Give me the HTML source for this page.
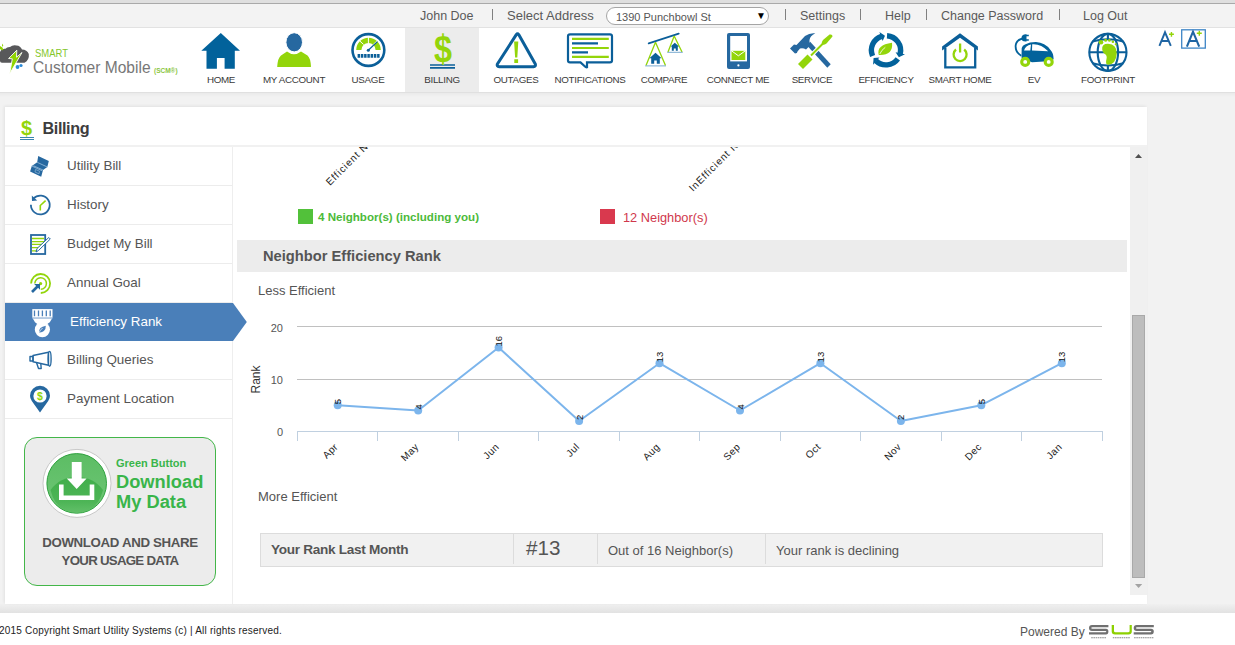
<!DOCTYPE html>
<html><head><meta charset="utf-8">
<style>
*{margin:0;padding:0;box-sizing:border-box}
html,body{width:1235px;height:645px;overflow:hidden;background:#f2f2f2;font-family:"Liberation Sans",sans-serif;color:#333}
.a{position:absolute}
.t{position:absolute;white-space:nowrap;line-height:1}
#topstrip{left:0;top:0;width:1235px;height:3px;background:#dfdfdf}
#topline{left:0;top:3px;width:1235px;height:1px;background:#a9a9a9}
#linkbar{left:0;top:4px;width:1235px;height:24px;background:#f3f3f3;border-bottom:1px solid #e2e2e2}
.lk{font-size:12.5px;color:#5a5a5a;top:5.5px}
.sep{position:absolute;top:5px;width:1.3px;height:10.5px;background:#808080}
#sel{left:606px;top:3px;width:163px;height:18px;border:1px solid #a5a5a5;border-radius:9px;background:#fff}
#nav{left:0;top:28px;width:1235px;height:65px;background:#fff;border-bottom:1px solid #e0e0e0}
.nl{font-size:9.8px;letter-spacing:-0.3px;color:#3a3a3a;top:46.5px;text-align:center;width:74px;margin-left:-37px}
#act{left:405px;top:0;width:74px;height:64px;background:#ececec}
#navsh{left:0;top:93px;width:1235px;height:4px;background:linear-gradient(rgba(0,0,0,0.035),rgba(0,0,0,0))}
#panel{left:5px;top:107px;width:1142px;height:497px;background:#fff;box-shadow:-1px -1px 3px rgba(0,0,0,0.07)}
#footer{left:0;top:613px;width:1235px;height:32px;background:#fff}
#gstrip{left:0;top:604px;width:1235px;height:9px;background:linear-gradient(#f0f0f0,#e2e2e2)}
.si{position:absolute;left:0;width:227px;height:39px;border-bottom:1px solid #ececec}
.si .t{font-size:13.4px;color:#555;left:62px;top:11.9px}
</style></head><body>
<div class="a" id="topstrip"></div>
<div class="a" id="topline"></div>
<div class="a" id="linkbar">
  <div class="t lk" style="left:420px">John Doe</div>
  <div class="sep" style="left:492px"></div>
  <div class="t lk" style="left:507px;font-size:13px;top:5px">Select Address</div>
  <div class="a" id="sel"><div class="t" style="left:9px;top:3.5px;font-size:11px;color:#555">1390 Punchbowl St</div>
    <div class="t" style="left:149px;top:3px;font-size:10px;color:#000">&#9660;</div></div>
  <div class="sep" style="left:785px"></div>
  <div class="t lk" style="left:800px">Settings</div>
  <div class="sep" style="left:860px"></div>
  <div class="t lk" style="left:885px">Help</div>
  <div class="sep" style="left:926px"></div>
  <div class="t lk" style="left:941px">Change Password</div>
  <div class="sep" style="left:1059px"></div>
  <div class="t lk" style="left:1083px">Log Out</div>
</div>

<div class="a" id="nav">
  <div class="a" id="act"></div>
  <!-- logo -->
  <svg class="a" style="left:0;top:0" width="32" height="50" viewBox="0 28 32 50">
    <path d="M0 52 Q2 48.2 5.5 48.8 Q7 46.8 10 47 Q12.5 44.6 16.5 45.4 Q20.5 45.6 22 49.5 Q27 49.5 28.8 54 Q29.5 60 24.5 62.8 L2 62.8 Q0 62.8 0 61 Z" fill="#58585a"/>
    <path d="M16.8 50.2 L8.6 58.5 L12.3 58.8 L9.7 73.7 L22 52.5 L16.5 57.2 Z" fill="#8fd400" stroke="#fff" stroke-width="0.9" stroke-linejoin="miter"/>
    <circle cx="17.5" cy="67" r="1.9" fill="#2a8ad8"/><circle cx="21" cy="65.5" r="1.6" fill="#2a8ad8"/>
    <path d="M0 46 Q3 47 3.5 50 Q1 50.5 0 49 Z M2.5 43.5 Q4 45.5 2.5 47 Q1.5 45 2.5 43.5 Z" fill="#8fd400"/>
  </svg>
  <div class="t" style="left:34.5px;top:20px;font-size:11px;color:#84c62a;transform:scaleX(0.86);transform-origin:0 0">SMART</div>
  <div class="t" style="left:33px;top:31px;font-size:17px;color:#777;transform:scaleX(0.915);transform-origin:0 0">Customer Mobile</div>
  <div class="t" style="left:154px;top:40px;font-size:6.5px;color:#8cc63f;font-weight:bold">(SCM&reg;)</div>

  <!-- icons -->
  <svg class="a" style="left:0;top:0" width="1235" height="64">
    <!-- home -->
    <path d="M220.8 4.9 L240 22.8 L234.8 22.8 L234.8 40.8 L224.6 40.8 L224.6 30.1 L216.9 30.1 L216.9 40.8 L206.5 40.8 L206.5 22.8 L201.3 22.8 Z" fill="#02629b"/>
    <!-- account -->
    <path d="M277.2 38.5 Q277.8 30 281 27.5 L287 23.5 Q294 29 301 23.5 L307.5 27.5 Q310.5 30 311 38.5 Q311 39 310 39 L278 39 Q277 39 277.2 38.5 Z" fill="#93d50a"/>
    <ellipse cx="294.2" cy="14.3" rx="8.3" ry="9.6" fill="#2668a0" stroke="#fff" stroke-width="1"/>
    <!-- usage -->
    <circle cx="368.4" cy="22" r="15.9" fill="none" stroke="#0b5f99" stroke-width="2.6"/>
    <path d="M356.2 22 A12.3 12.3 0 0 1 380.8 22 L375.6 22 A7.1 7.1 0 0 0 361.4 22 Z" fill="#93d50a"/>
    <path d="M368.4 9 L368.4 15.5 M359.6 12.8 L363.6 16.5 M377.2 12.8 L373.2 16.5" stroke="#fff" stroke-width="1"/>
    <path d="M368.3 22.3 L377.4 13.6" stroke="#0b5f99" stroke-width="1.2"/>
    <circle cx="368.3" cy="22.3" r="1.5" fill="#0b5f99"/>
    <path d="M357.6 27.8 H380" stroke="#0b5f99" stroke-width="3.8" stroke-dasharray="2.5 0.75"/>
    <!-- billing -->
    <path d="M430 37 H455 M430 39.9 H455" stroke="#0b5f99" stroke-width="1.7"/>
    <!-- outages -->
    <path d="M516.3 6.6 Q517.5 5 518.7 6.6 L535.3 36 Q536 38.5 533.5 38.7 L499.2 38.7 Q496.6 38.5 497.4 36 Z" fill="none" stroke="#0b5f99" stroke-width="3" stroke-linejoin="round"/>
    <path d="M514.1 13.5 L518.3 13.5 L517.3 29.5 L515.1 29.5 Z M514.3 31.3 H518.1 V35 H514.3 Z" fill="#93d50a"/>
    <!-- notifications -->
    <path d="M570 6.3 H610 Q612 6.3 612 8.3 V32.6 Q612 34.4 610 34.4 L587 34.4 L587 39.2 Q586 39.5 585 38.5 L580.5 34.4 L570 34.4 Q568 34.4 568 32.6 V8.3 Q568 6.3 570 6.3 Z" fill="none" stroke="#0b5f99" stroke-width="2.2"/>
    <path d="M572 10.8 H608.8 M572 20 H608.8 M572 28.9 H608.8" stroke="#93d50a" stroke-width="2.2"/>
    <path d="M572 15.4 H598 M572 24.3 H588" stroke="#0b5f99" stroke-width="2.2"/>
    <!-- compare -->
    <path d="M648.7 15.4 L678.7 5.6" stroke="#0b5f99" stroke-width="1.8" stroke-linecap="round"/>
    <path d="M655.5 14.2 L646 37.6 M655.5 14.2 L665.5 37.6 M674.2 8 L668 24 M674.2 8 L682 24" stroke="#93d50a" stroke-width="1.3"/>
    <path d="M645.2 37.9 H666 M667.2 24.3 H682.8" stroke="#7aaad0" stroke-width="1"/>
    <path d="M655.5 24.8 L661.6 30.2 L659.8 30.2 L659.8 35.8 L656.8 35.8 L656.8 32.5 L654.2 32.5 L654.2 35.8 L651.2 35.8 L651.2 30.2 L649.4 30.2 Z" fill="#0b5f99"/>
    <path d="M674.8 14.8 L679 18.5 L677.8 18.5 L677.8 22.8 L675.8 22.8 L675.8 20.5 L673.8 20.5 L673.8 22.8 L671.8 22.8 L671.8 18.5 L670.6 18.5 Z" fill="#0b5f99"/>
    <!-- connect me -->
    <rect x="727" y="4.9" width="23" height="36" rx="2" fill="#2668a0"/>
    <rect x="730.2" y="8" width="16.8" height="25.4" fill="#fff"/>
    <path d="M731.5 22.8 H745.3 V32 H731.5 Z" fill="#93d50a"/>
    <path d="M731.5 22.8 L738.4 27.8 L745.3 22.8" fill="none" stroke="#fff" stroke-width="1"/>
    <circle cx="738.4" cy="37.4" r="1.1" fill="#fff"/>
    <!-- service -->
    <g transform="translate(0 -28)">
    <path d="M810.2 41.7 L806.8 45.3 L827.3 67.8 L830.7 64.2 Z" fill="#2668a0"/>
    <path d="M790 48.5 L794 44.5 L796.5 45 L805 36 Q810 32.5 815.3 33.3 Q810 36 809.5 40 Q809 43 810.5 45 L806 49.5 Q803 47.5 800 48.5 L797.5 51.5 Q797.5 53.5 795 53.5 Z" fill="#2668a0"/>
    <path d="M823 43.5 L811 55.5" stroke="#fff" stroke-width="4"/>
    <path d="M823 43.5 L811 55.5" stroke="#93d50a" stroke-width="2"/>
    <path d="M829.5 34.6 Q832.5 33.8 832.5 36.5 L826.5 43.5 Q823.5 45.8 821.8 44.2 Q821.2 42.2 823 40 Z" fill="#93d50a"/>
    <path d="M807.5 54.5 L812.5 59.5 L803 69 L798 64 Z" fill="#93d50a"/>
    </g>
    <!-- efficiency -->
    <g transform="translate(0 -28)">
    <path d="M887.02 35.74 A14.6 14.6 0 0 1 900.17 53.83" fill="none" stroke="#02629b" stroke-width="5.4"/>
    <path d="M895.59 52.34 L904.98 54.33 L898.89 57.15 Z" fill="#02629b"/>
    <path d="M897.81 58.88 A14.6 14.6 0 0 1 875.86 60.80" fill="none" stroke="#02629b" stroke-width="5.4"/>
    <path d="M879.44 57.58 L873.02 64.72 L873.62 58.04 Z" fill="#02629b"/>
    <path d="M872.56 56.00 A14.6 14.6 0 0 1 881.49 36.41" fill="none" stroke="#02629b" stroke-width="5.4"/>
    <path d="M882.65 41.09 L879.36 32.07 L884.98 35.74 Z" fill="#02629b"/>
    <path d="M878.8 55 Q876 45 892 42.8 Q893.5 55.5 878.8 55 Z" fill="#93d50a"/>
    <path d="M879.8 54 Q881.5 50 885.3 47.3" stroke="#fff" stroke-width="0.8" fill="none"/>
    </g>
    <!-- smart home -->
    <path d="M942.1 18.5 L960 5.3 L977.9 18.5 L977.9 22.6 L960 9.8 L942.1 22.6 Z" fill="#0b5f99"/>
    <path d="M945.3 20 V39.4 H975.2 V20" fill="none" stroke="#0b5f99" stroke-width="2.3"/>
    <path d="M956 21.5 A6.5 6.5 0 1 0 964.2 21.5" fill="none" stroke="#93d50a" stroke-width="2.3"/>
    <path d="M960.1 15.5 V24.5" stroke="#93d50a" stroke-width="2.3"/>
    <!-- ev -->
    <g transform="translate(0 -28)">
    <path d="M1021.5 57 L1021.7 48 Q1022.5 45 1025 44.5 Q1030 42 1036 42.1 Q1045 42.5 1050.5 50 Q1053.5 53 1053.6 59 L1052 61 L1032 62.3 L1021.8 58.5 Z" fill="#02629b"/>
    <path d="M1024 50.5 Q1025.5 45.5 1031 44.5 L1030.3 50.5 Z M1032.2 44.2 Q1041 43.5 1048.2 51.3 L1032 50.6 Z" fill="#fff"/>
    <path d="M1021.2 55.8 Q1015.5 52.5 1015.6 46 Q1016 40 1022.5 38.5" fill="none" stroke="#02629b" stroke-width="1.8"/>
    <path d="M1021.6 37 Q1022.5 34.3 1025.5 34.3 L1026.5 34.3 V41.5 L1025.5 41.5 Q1022 41.5 1021.6 39 Z" fill="#02629b"/>
    <path d="M1026 35.6 H1028.8 M1026 39.9 H1028.8" stroke="#02629b" stroke-width="1.5"/>
    <circle cx="1025.2" cy="61.9" r="3.5" fill="#fff" stroke="#93d50a" stroke-width="3.1"/>
    <circle cx="1048.7" cy="61.9" r="3.5" fill="#fff" stroke="#93d50a" stroke-width="3.1"/>
    </g>
    <!-- footprint -->
    <g transform="translate(0 -28)">
    <g fill="none" stroke="#0b5f99" stroke-width="2.1">
      <ellipse cx="1107.9" cy="52.35" rx="18.6" ry="18.5"/>
      <ellipse cx="1107.9" cy="52.35" rx="10.2" ry="18.5"/>
      <path d="M1089.3 52.3 H1126.5 M1107.9 33.8 V38.2 M1107.9 66.5 V71 M1092.5 41.5 Q1107.9 37 1123.3 41.5 M1092.5 63.2 Q1107.9 67.7 1123.3 63.2"/>
    </g>
    <path d="M1102.2 49.5 Q1101.5 43.8 1108 43.8 Q1117 44.5 1116.8 53.5 Q1116 64.5 1108 64.8 Q1105 64.5 1106.5 59 Q1107.5 55 1104.2 53.5 Q1102.5 52 1102.2 49.5 Z" fill="#93d50a"/>
    <circle cx="1101" cy="42.3" r="2.3" fill="#93d50a"/><circle cx="1105.6" cy="40.2" r="1.5" fill="#93d50a"/>
    <circle cx="1109.4" cy="40.4" r="1.4" fill="#93d50a"/><circle cx="1112.9" cy="41.8" r="1.3" fill="#93d50a"/>
    <circle cx="1115.8" cy="44.3" r="1.1" fill="#93d50a"/>
    </g>
  </svg>
  <div class="t nl" style="left:221px">HOME</div>
  <div class="t nl" style="left:294px">MY ACCOUNT</div>
  <div class="t nl" style="left:368px">USAGE</div>
  <div class="t nl" style="left:442px">BILLING</div>
  <div class="t nl" style="left:516px">OUTAGES</div>
  <div class="t nl" style="left:590px">NOTIFICATIONS</div>
  <div class="t nl" style="left:664px">COMPARE</div>
  <div class="t nl" style="left:738px">CONNECT ME</div>
  <div class="t nl" style="left:812px">SERVICE</div>
  <div class="t nl" style="left:886px">EFFICIENCY</div>
  <div class="t nl" style="left:960px">SMART HOME</div>
  <div class="t nl" style="left:1034px">EV</div>
  <div class="t nl" style="left:1108px">FOOTPRINT</div>
  <div class="t" style="left:433.5px;top:1.6px;font-size:38.5px;font-weight:bold;color:#93d50a;transform:scaleX(0.84);transform-origin:0 0">$</div>
  <!-- A+ -->
  <svg class="a" style="left:1150px;top:0" width="60" height="24" viewBox="1150 28 60 24">
    <g fill="none" stroke="#1f65a3" stroke-linecap="butt">
      <path d="M1159.4 45.8 L1165 32.3 L1170.8 45.8 M1161.4 41 H1168.7" stroke-width="1.9"/>
      <path d="M1186.9 46.7 L1193 31.7 L1199.2 46.7 M1189.3 41 H1196.8" stroke-width="2.1"/>
    </g>
    <path d="M1169 34.3 H1173.9 M1171.45 31.9 V36.7 M1196.8 33.3 H1201.8 M1199.3 30.8 V35.8" stroke="#93d50a" stroke-width="1.4"/>
    <rect x="1181.7" y="29.8" width="23.6" height="18.3" fill="none" stroke="#3d85c6" stroke-width="1.3"/>
  </svg>
</div>

<div class="a" id="navsh"></div>
<div class="a" id="gstrip"></div>
<div class="a" id="panel">
  <div class="t" style="left:37.5px;top:12.8px;font-size:16.2px;letter-spacing:-0.4px;font-weight:bold;color:#3d3d3d">Billing</div>
  <div class="t" style="left:16px;top:11px;font-size:20px;font-weight:bold;color:#93d50a">$</div>
  <div class="a" style="left:15px;top:29.5px;width:14px;height:1.3px;background:#3a84b0"></div>
  <div class="a" style="left:15px;top:31.5px;width:14px;height:1.3px;background:#3a84b0"></div>
  <div class="a" style="left:0;top:38px;width:1142px;height:2px;background:#f1f1f1"></div>
  <div class="a" style="left:227px;top:40px;width:1px;height:457px;background:#eeeeee"></div>
  <!-- sidebar -->
  <div class="si" style="top:40px"><div class="t">Utility Bill</div></div>
  <div class="si" style="top:79px"><div class="t">History</div></div>
  <div class="si" style="top:118px"><div class="t">Budget My Bill</div></div>
  <div class="si" style="top:157px"><div class="t">Annual Goal</div></div>
  <div class="a" style="left:0;top:196px;width:228px;height:38px;background:#4a7fb9"></div>
  <svg class="a" style="left:228px;top:196px" width="15" height="38"><path d="M0 0 L13.8 19 L0 38 Z" fill="#4a7fb9"/></svg>
  <div class="t" style="left:65px;top:208.3px;font-size:13.4px;color:#fff">Efficiency Rank</div>
  <div class="si" style="top:234px;border-top:0"><div class="t">Billing Queries</div></div>
  <div class="si" style="top:273px"><div class="t">Payment Location</div></div>
<svg class="a" style="left:0;top:0" width="240" height="320" viewBox="5 107 240 320">
    <!-- utility bill -->
    <path d="M38.2 156.1 L48.8 160.9 L47.3 167 L43 170 L41.2 176.8 L30.1 171.6 L31.8 166 L37.2 162.3 Z" fill="#2668a0"/>
    <path d="M37.2 162.3 L47.3 167 M33.5 165.8 L43 170 M31.8 166 L42.2 170.8" stroke="#8fb6d6" stroke-width="0.9" fill="none"/>
    <path d="M35.5 169.5 L39.5 171.2 L39 173.8 L35 172 Z" fill="none" stroke="#8fb6d6" stroke-width="0.7"/>
    <!-- history -->
    <path d="M33.5 198.5 A9.4 9.4 0 1 1 30.9 204.8" fill="none" stroke="#2668a0" stroke-width="1.8"/>
    <path d="M31.8 195.5 L37.2 200.5 L32 200.9 Z" fill="#2668a0"/>
    <path d="M40.3 210.5 V205.5 L45.6 200.6" fill="none" stroke="#93d50a" stroke-width="1.6"/>
    <!-- budget -->
    <rect x="31" y="235" width="14.2" height="19" fill="none" stroke="#2668a0" stroke-width="1.8"/>
    <path d="M32 238.5 H44 M32 241.6 H44 M32 244.4 H42 M32 247.6 H38.5 M32 250.9 H36" stroke="#93d50a" stroke-width="1.3"/>
    <path d="M36 252 L37 248.5 L48.8 237.5 L50.3 239 L38.5 250.5 Z" fill="#fff" stroke="#2668a0" stroke-width="1"/>
    <!-- annual goal -->
    <path d="M31.1 283.5 A9.5 9.5 0 1 1 40.8 293" fill="none" stroke="#93d50a" stroke-width="1.8"/>
    <path d="M34.8 283.5 A5.8 5.8 0 1 1 40.8 289.3" fill="none" stroke="#93d50a" stroke-width="1.5"/>
    <circle cx="40.6" cy="283.6" r="1.6" fill="#93d50a"/>
    <path d="M32 292 L37.5 286.5" stroke="#2668a0" stroke-width="2.6"/>
    <path d="M34.2 284 L40 284 L40 289.8 Z" fill="#2668a0"/>
    <!-- efficiency rank (white) -->
    <path d="M32.3 309.1 H52.5 V317.6 H32.3 Z" fill="#fff"/>
    <path d="M34.5 310.6 V316.2 M38.5 310.6 V316.2 M42.4 310.6 V316.2 M46.3 310.6 V316.2 M50.2 310.6 V316.2" stroke="#4a7fb9" stroke-width="1.3"/>
    <path d="M32.8 318.5 H52 L49.8 322.2 Q48 323.5 47.5 324 L37.3 324 Q36.5 323.5 35 322.2 Z" fill="#fff"/>
    <rect x="32.3" y="317.6" width="20.2" height="0.9" fill="#c8d8ea"/>
    <circle cx="42.4" cy="329.6" r="7.6" fill="#fff"/>
    <path d="M39 332.8 Q38.5 327 45.8 325.8 Q46 332 39 332.8 Z" fill="#4a7fb9"/>
    <path d="M38.5 333.5 Q40.5 329.5 42.6 328" stroke="#fff" stroke-width="0.7" fill="none"/>
    <!-- megaphone -->
    <g fill="none" stroke="#2668a0" stroke-width="1.4" stroke-linejoin="round">
      <path d="M30 356.5 H33 V361 H30 Z"/>
      <path d="M33 355.5 L48.5 352.3 V365.3 L33 361.8 Z"/>
      <ellipse cx="49.6" cy="358.8" rx="1.5" ry="7.4"/>
      <path d="M36.5 362.5 L38.5 368.5 L41.2 368.5 L40.8 363.3"/>
    </g>
    <!-- payment location -->
    <path d="M40 412.6 L31.8 401 Q30 398.5 30 395.8 A10 10 0 0 1 50 395.8 Q50 398.5 48.2 401 Z" fill="#2668a0"/>
    <circle cx="40" cy="396" r="6.6" fill="#fff"/>
  </svg>
  <div class="t" style="left:32px;top:284px;font-size:10.5px;font-weight:bold;color:#93d50a">$</div>
  <!-- green button -->
  <div class="a" style="left:19px;top:330px;width:192px;height:149px;border:1px solid #43b649;border-radius:13px;background:#ececec"></div>
  <svg class="a" style="left:0;top:0" width="240" height="500" viewBox="5 107 240 500">
    <defs>
      <linearGradient id="gtop" x1="0" y1="0" x2="0" y2="1"><stop offset="0" stop-color="#5cbd64"/><stop offset="1" stop-color="#6fc676"/></linearGradient>
      <linearGradient id="gbot" x1="0" y1="0" x2="0" y2="1"><stop offset="0" stop-color="#41ae4b"/><stop offset="0.7" stop-color="#4db556"/><stop offset="1" stop-color="#62bf69"/></linearGradient>
    </defs>
    <circle cx="77" cy="483.4" r="34" fill="#fff" stroke="#bdbdbd" stroke-width="0.8"/>
    <circle cx="76.7" cy="483.4" r="29.8" fill="url(#gtop)" stroke="#2fa23f" stroke-width="1"/>
    <path d="M50.5 490 Q60 477 76.7 477 Q93.4 477 103 490 Q98 512 76.7 512.5 Q55.4 512 50.5 490 Z" fill="url(#gbot)"/>
    <path d="M71.8 462 H81.6 V478.6 H86.6 L76.7 489 L66.8 478.6 H71.8 Z" fill="#fff"/>
    <path d="M61.3 484.5 V497.7 H92 V484.5" fill="none" stroke="#fff" stroke-width="4.6"/>
  </svg>
  <div class="t" style="left:111px;top:351px;font-size:11px;font-weight:bold;color:#39b54a">Green Button</div>
  <div class="t" style="left:111px;top:365.5px;font-size:18.3px;font-weight:bold;color:#39b54a">Download</div>
  <div class="t" style="left:111px;top:385.5px;font-size:18.3px;font-weight:bold;color:#39b54a">My Data</div>
  <div class="t" style="left:19px;width:192px;text-align:center;top:428.8px;font-size:13.3px;letter-spacing:-0.35px;font-weight:bold;color:#555">DOWNLOAD AND SHARE</div>
  <div class="t" style="left:19px;width:192px;text-align:center;top:446.8px;font-size:13.3px;letter-spacing:-0.75px;font-weight:bold;color:#555">YOUR USAGE DATA</div>
  <!-- content -->
  <div class="a" id="content" style="left:228px;top:40px;width:914px;height:448px;overflow:hidden">
<!--CHART--><svg class="a" style="left:0;top:0" width="914" height="448" viewBox="233 147 914 448">
<g font-family="Liberation Sans" fill="#222">
<text x="330" y="186" transform="rotate(-45 330 186)" font-size="10" letter-spacing="0.9">Efficient Neighbor(s)</text>
<text x="693" y="192" transform="rotate(-45 693 192)" font-size="10" letter-spacing="0.9">InEfficient Neighbor(s)</text>
</g>
<path d="M297 326.5 H1102 M297 379.5 H1102" stroke="#c0c0c0" stroke-width="1"/>
<path d="M297 431.5 H1102.5 M297.5 431 V441 M377.5 431 V441 M458.5 431 V441 M538.5 431 V441 M619.5 431 V441 M699.5 431 V441 M780.5 431 V441 M860.5 431 V441 M941.5 431 V441 M1021.5 431 V441 M1102.5 431 V441" stroke="#c0d0e0" stroke-width="1"/>
<text x="283" y="332.0" text-anchor="end" font-size="11" fill="#555">20</text>
<text x="283" y="384.0" text-anchor="end" font-size="11" fill="#555">10</text>
<text x="283" y="436.0" text-anchor="end" font-size="11" fill="#555">0</text>
<text x="0" y="0" transform="translate(259.5 379.5) rotate(-90)" text-anchor="middle" font-size="12" fill="#333">Rank</text>
<path d="M337.7 405.2 L418.2 410.5 L498.6 347.5 L579.1 421.0 L659.5 363.2 L740.0 410.5 L820.4 363.2 L900.9 421.0 L981.3 405.2 L1061.8 363.2" fill="none" stroke="#7cb5ec" stroke-width="2" stroke-linejoin="round"/>
<circle cx="337.7" cy="405.2" r="4" fill="#7cb5ec"/>
<circle cx="418.2" cy="410.5" r="4" fill="#7cb5ec"/>
<circle cx="498.6" cy="347.5" r="4" fill="#7cb5ec"/>
<circle cx="579.1" cy="421.0" r="4" fill="#7cb5ec"/>
<circle cx="659.5" cy="363.2" r="4" fill="#7cb5ec"/>
<circle cx="740.0" cy="410.5" r="4" fill="#7cb5ec"/>
<circle cx="820.4" cy="363.2" r="4" fill="#7cb5ec"/>
<circle cx="900.9" cy="421.0" r="4" fill="#7cb5ec"/>
<circle cx="981.3" cy="405.2" r="4" fill="#7cb5ec"/>
<circle cx="1061.8" cy="363.2" r="4" fill="#7cb5ec"/>
<text x="0" y="0" transform="translate(341.2 404.2) rotate(-90)" font-size="9.5" fill="#111">5</text>
<text x="0" y="0" transform="translate(421.7 409.5) rotate(-90)" font-size="9.5" fill="#111">4</text>
<text x="0" y="0" transform="translate(502.1 346.5) rotate(-90)" font-size="9.5" fill="#111">16</text>
<text x="0" y="0" transform="translate(582.6 420.0) rotate(-90)" font-size="9.5" fill="#111">2</text>
<text x="0" y="0" transform="translate(663.0 362.2) rotate(-90)" font-size="9.5" fill="#111">13</text>
<text x="0" y="0" transform="translate(743.5 409.5) rotate(-90)" font-size="9.5" fill="#111">4</text>
<text x="0" y="0" transform="translate(823.9 362.2) rotate(-90)" font-size="9.5" fill="#111">13</text>
<text x="0" y="0" transform="translate(904.4 420.0) rotate(-90)" font-size="9.5" fill="#111">2</text>
<text x="0" y="0" transform="translate(984.8 404.2) rotate(-90)" font-size="9.5" fill="#111">5</text>
<text x="0" y="0" transform="translate(1065.3 362.2) rotate(-90)" font-size="9.5" fill="#111">13</text>
<text x="0" y="0" transform="translate(338.7 447.5) rotate(-45)" text-anchor="end" font-size="10" letter-spacing="0.4" fill="#222">Apr</text>
<text x="0" y="0" transform="translate(419.2 447.5) rotate(-45)" text-anchor="end" font-size="10" letter-spacing="0.4" fill="#222">May</text>
<text x="0" y="0" transform="translate(499.6 447.5) rotate(-45)" text-anchor="end" font-size="10" letter-spacing="0.4" fill="#222">Jun</text>
<text x="0" y="0" transform="translate(580.1 447.5) rotate(-45)" text-anchor="end" font-size="10" letter-spacing="0.4" fill="#222">Jul</text>
<text x="0" y="0" transform="translate(660.5 447.5) rotate(-45)" text-anchor="end" font-size="10" letter-spacing="0.4" fill="#222">Aug</text>
<text x="0" y="0" transform="translate(741.0 447.5) rotate(-45)" text-anchor="end" font-size="10" letter-spacing="0.4" fill="#222">Sep</text>
<text x="0" y="0" transform="translate(821.4 447.5) rotate(-45)" text-anchor="end" font-size="10" letter-spacing="0.4" fill="#222">Oct</text>
<text x="0" y="0" transform="translate(901.9 447.5) rotate(-45)" text-anchor="end" font-size="10" letter-spacing="0.4" fill="#222">Nov</text>
<text x="0" y="0" transform="translate(982.3 447.5) rotate(-45)" text-anchor="end" font-size="10" letter-spacing="0.4" fill="#222">Dec</text>
<text x="0" y="0" transform="translate(1062.8 447.5) rotate(-45)" text-anchor="end" font-size="10" letter-spacing="0.4" fill="#222">Jan</text>
</svg><!--/CHART-->
    <div class="a" style="left:65px;top:62px;width:15px;height:15px;background:#52c13a"></div>
    <div class="t" style="left:85px;top:64.3px;font-size:11.6px;font-weight:bold;color:#4cba3a">4 Neighbor(s) (including you)</div>
    <div class="a" style="left:366.6px;top:62px;width:15px;height:15px;background:#d9394e"></div>
    <div class="t" style="left:390px;top:65px;font-size:12.8px;color:#d0384c">12 Neighbor(s)</div>
    <div class="a" style="left:4px;top:93px;width:890px;height:32px;background:#ececec"></div>
    <div class="t" style="left:30px;top:102px;font-size:14.7px;font-weight:bold;color:#555">Neighbor Efficiency Rank</div>
    <div class="t" style="left:25px;top:136.5px;font-size:13px;color:#555">Less Efficient</div>
    <div class="t" style="left:25px;top:342.5px;font-size:13px;color:#555">More Efficient</div>
    <div class="a" style="left:27px;top:386px;width:843px;height:34px;background:#f1f1f1;border:1px solid #dcdcdc"></div>
    <div class="a" style="left:280px;top:387px;width:1px;height:30px;background:#dcdcdc"></div>
    <div class="a" style="left:364px;top:387px;width:1px;height:30px;background:#dcdcdc"></div>
    <div class="a" style="left:532px;top:387px;width:1px;height:30px;background:#dcdcdc"></div>
    <div class="t" style="left:38px;top:395.5px;font-size:13.6px;letter-spacing:-0.3px;font-weight:bold;color:#555">Your Rank Last Month</div>
    <div class="t" style="left:293px;top:390.5px;font-size:20.6px;color:#555">#13</div>
    <div class="t" style="left:375px;top:397px;font-size:13px;color:#555">Out of 16 Neighbor(s)</div>
    <div class="t" style="left:543px;top:397px;font-size:13px;color:#555">Your rank is declining</div>
  </div>
  <!-- scrollbar -->
  <div class="a" style="left:1125px;top:40px;width:17px;height:448px;background:#f0f0f0"></div>
  <svg class="a" style="left:1125px;top:40px" width="17" height="448">
    <path d="M8.5 7 L12 11 L5 11 Z" fill="#505050"/>
    <rect x="2.5" y="168.5" width="12" height="262" fill="#bdbdbd" stroke="#a9a9a9" stroke-width="1"/>
    <path d="M5 437 L12.2 437 L8.6 441 Z" fill="#a3a3a3"/>
  </svg>
</div>
<div class="a" id="footer">
  <div class="t" style="left:-1px;top:13px;font-size:10px;letter-spacing:0.2px;color:#222">2015 Copyright Smart Utility Systems (c) | All rights reserved.</div>
  <div class="t" style="left:1020px;top:13px;font-size:12px;color:#555">Powered By</div>
  <svg class="a" style="left:1088px;top:9px" width="68" height="20" viewBox="1088 622 68 20">
    <g fill="#707070">
      <path d="M1092 625 H1108.4 V627.2 H1092.5 Q1091.2 627.2 1091.2 628 Q1091.2 628.7 1092.5 628.7 H1106 Q1108.4 628.7 1108.4 631.5 Q1108.4 634.4 1106 634.4 H1089 V632.2 H1105.5 Q1106.3 632.2 1106.3 631.5 Q1106.3 630.9 1105.5 630.9 H1092 Q1089 630.9 1089 628 Q1089 625 1092 625 Z"/>
      <path d="M1136.7 625 H1153.8 V627.2 H1137.2 Q1135.9 627.2 1135.9 628 Q1135.9 628.7 1137.2 628.7 H1151 Q1153.8 628.7 1153.8 631.5 Q1153.8 634.4 1151 634.4 H1133.7 V632.2 H1150.5 Q1151.3 632.2 1151.3 631.5 Q1151.3 630.9 1150.5 630.9 H1136.7 Q1133.7 630.9 1133.7 628 Q1133.7 625 1136.7 625 Z"/>
    </g>
    <path d="M1111.7 625 H1114 V631 Q1114 632.2 1115.5 632.2 H1128 Q1129.6 632.2 1129.6 631 V625 H1131.8 V631.5 Q1131.8 634.4 1128.5 634.4 H1115 Q1111.7 634.4 1111.7 631.5 Z" fill="#8dd000"/>
    <path d="M1091.2 637.8 H1106 M1112.8 637.8 H1129.8 M1134.1 637.8 H1154" stroke="#888" stroke-width="1.1" stroke-dasharray="1.6 0.6"/>
  </svg>
</div>
</body></html>
